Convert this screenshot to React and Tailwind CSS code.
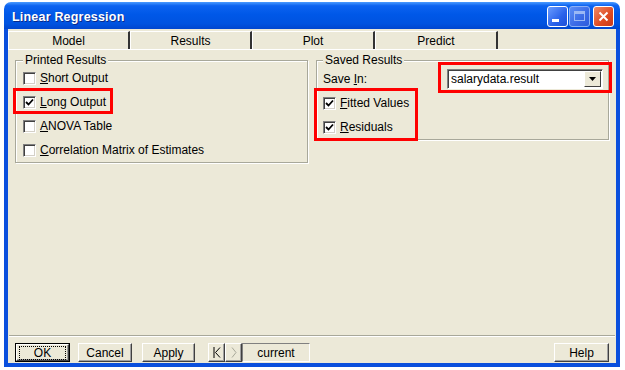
import React from 'react';

const Check = ({ checked }) => (
  <span className="w-[13px] h-[13px] shrink-0 bg-white border border-t-[#808080] border-l-[#808080] border-b-white border-r-white shadow-[inset_1px_1px_0_#404040,inset_-1px_-1px_0_#d4d0c8] flex items-center justify-center">
    {checked && (
      <svg width="9" height="9" viewBox="0 0 9 9">
        <path d="M1 4 L3.5 6.5 L8 1.5" stroke="#000" strokeWidth="1.8" fill="none" />
      </svg>
    )}
  </span>
);

const CheckRow = ({ checked, u, rest }) => (
  <div className="h-[24px] flex items-center gap-[4px]">
    <Check checked={checked} />
    <span>
      <u>{u}</u>
      {rest}
    </span>
  </div>
);

const Btn = ({ children, className = '' }) => (
  <div className={`h-[19px] bg-[#ECE9D8] border border-t-white border-l-white border-b-[#404040] border-r-[#404040] shadow-[inset_-1px_-1px_0_#a0a0a0] flex items-center justify-center ${className}`}>
    {children}
  </div>
);

const Tab = ({ label, w }) => (
  <div className={`${w} h-[18px] border-t border-l border-t-white border-l-white border-r-2 border-r-[#333] flex items-center justify-center`}>
    {label}
  </div>
);

export default function App() {
  return (
    <div className="relative w-[625px] h-[370px] bg-white pt-[2px] pl-[4px] font-['Liberation_Sans',Arial,sans-serif] text-[12px] text-black">
      <div className="w-[616px] h-[365px] flex flex-col">
        {/* title bar */}
        <div className="h-[27px] rounded-t-[7px] bg-[linear-gradient(to_bottom,#4a9bff_0%,#0d63f0_14%,#0058e8_45%,#0053e0_80%,#0046cf_100%)] flex items-center pl-[8px] pr-[6px]">
          <span className="flex-1 pt-[3px] text-white font-bold text-[12.5px] tracking-[0.2px] [text-shadow:1px_1px_0_#0a2a8a]">Linear Regression</span>
          <div className="flex items-center pt-[1px]">
            <div className="w-[21px] h-[21px] rounded-[3px] border border-white bg-[linear-gradient(135deg,#6a9cff,#2a62ea_60%,#1d4fd8)] flex items-end pl-[4px] pb-[4px]">
              <div className="w-[7px] h-[3px] bg-white"></div>
            </div>
            <div className="ml-[1px] w-[21px] h-[21px] rounded-[3px] border border-[#8cb0f5] bg-[linear-gradient(135deg,#5d8ef5,#3a6ae6_60%,#2e5bdc)] flex items-center justify-center">
              <div className="w-[11px] h-[10px] border border-[#9bb8f5] border-t-[3px]"></div>
            </div>
            <div className="ml-[3px] w-[21px] h-[21px] rounded-[3px] border border-white bg-[linear-gradient(135deg,#f08a65,#de4a22_60%,#c8391a)] flex items-center justify-center">
              <svg width="11" height="11" viewBox="0 0 11 11">
                <path d="M1.5 1.5 L9.5 9.5 M9.5 1.5 L1.5 9.5" stroke="#fff" strokeWidth="2" />
              </svg>
            </div>
          </div>
        </div>

        {/* frame */}
        <div className="flex-1 bg-[#0a4fdd] px-[4px] pb-[4px] flex">
          <div className="flex-1 bg-[#ECE9D8] flex flex-col">
            {/* tabs */}
            <div className="mt-[2px] flex border-b border-b-white">
              <Tab label="Model" w="w-[122px]" />
              <Tab label="Results" w="w-[122px]" />
              <Tab label="Plot" w="w-[123px]" />
              <Tab label="Predict" w="w-[123px]" />
            </div>

            {/* panel */}
            <div className="flex-1 flex items-start gap-[8px] px-[7px] pt-[3px]">
              <fieldset className="w-[293px] border border-[#a8a89a] shadow-[inset_1px_1px_0_#fff,1px_1px_0_#fff] pl-[7px]">
                <legend className="px-[2px] leading-[14px] bg-[#ECE9D8]">Printed Results</legend>
                <div className="-mt-[1px]">
                  <CheckRow u="S" rest="hort Output" />
                  <CheckRow checked u="L" rest="ong Output" />
                  <CheckRow u="A" rest="NOVA Table" />
                  <CheckRow u="C" rest="orrelation Matrix of Estimates" />
                </div>
              </fieldset>
              <fieldset className="w-[293px] border border-[#a8a89a] shadow-[inset_1px_1px_0_#fff,1px_1px_0_#fff] pl-[6px] pr-[5px]">
                <legend className="px-[2px] leading-[14px] bg-[#ECE9D8]">Saved Results</legend>
                <div className="h-[24px] flex items-center justify-between">
                  <span>Save <u>I</u>n:</span>
                  <div className="w-[156px] h-[20px] bg-white border border-t-[#808080] border-l-[#808080] border-b-white border-r-white shadow-[inset_1px_1px_0_#404040] flex items-center pl-[3px] pr-[1px]">
                    <span className="flex-1">salarydata.result</span>
                    <div className="w-[17px] h-[16px] bg-[#ECE9D8] border border-t-white border-l-white border-b-[#404040] border-r-[#404040] flex items-center justify-center">
                      <svg width="7" height="4" viewBox="0 0 7 4">
                        <path d="M0 0 H7 L3.5 4 Z" fill="#000" />
                      </svg>
                    </div>
                  </div>
                </div>
                <CheckRow checked u="F" rest="itted Values" />
                <CheckRow checked u="R" rest="esiduals" />
              </fieldset>
            </div>

            {/* separator */}
            <div className="mx-[1px] h-[2px] border-t border-t-[#a8a89a] border-b border-b-white"></div>

            {/* buttons */}
            <div className="h-[26px] flex items-start pt-[6px] pl-[7px] pr-[7px]">
              <div className="w-[55px] h-[19px] border border-black">
                <Btn className="h-full">
                  <span className="leading-[12px] outline-1 outline-dotted outline-black w-[45px] text-center">OK</span>
                </Btn>
              </div>
              <Btn className="ml-[8px] w-[54px]">Cancel</Btn>
              <Btn className="ml-[10px] w-[53px]">Apply</Btn>
              <div className="ml-[13px] flex">
                <Btn className="w-[17px]">
                  <svg width="8" height="11" viewBox="0 0 8 11">
                    <path d="M1 0 V11 M7 0.5 L2.5 5.5 L7 10.5" stroke="#000" strokeWidth="1" fill="none" />
                  </svg>
                </Btn>
                <Btn className="w-[17px]">
                  <svg width="6" height="11" viewBox="0 0 6 11">
                    <path d="M1 0.5 L5 5.5 L1 10.5" stroke="#a8a89a" strokeWidth="1" fill="none" />
                  </svg>
                </Btn>
                <div className="w-[68px] h-[19px] border border-t-[#808080] border-l-[#808080] border-b-white border-r-white flex items-center justify-center">current</div>
              </div>
              <div className="flex-1"></div>
              <Btn className="w-[55px]">Help</Btn>
            </div>
          </div>
        </div>
      </div>

      {/* red annotation boxes */}
      <div className="absolute left-[13px] top-[88px] w-[100px] h-[26px] border-[3px] border-[#ff0000] pointer-events-none"></div>
      <div className="absolute left-[314px] top-[88px] w-[104px] h-[53px] border-[3px] border-[#ff0000] pointer-events-none"></div>
      <div className="absolute left-[438px] top-[62px] w-[174px] h-[31px] border-[3px] border-[#ff0000] pointer-events-none"></div>
    </div>
  );
}
